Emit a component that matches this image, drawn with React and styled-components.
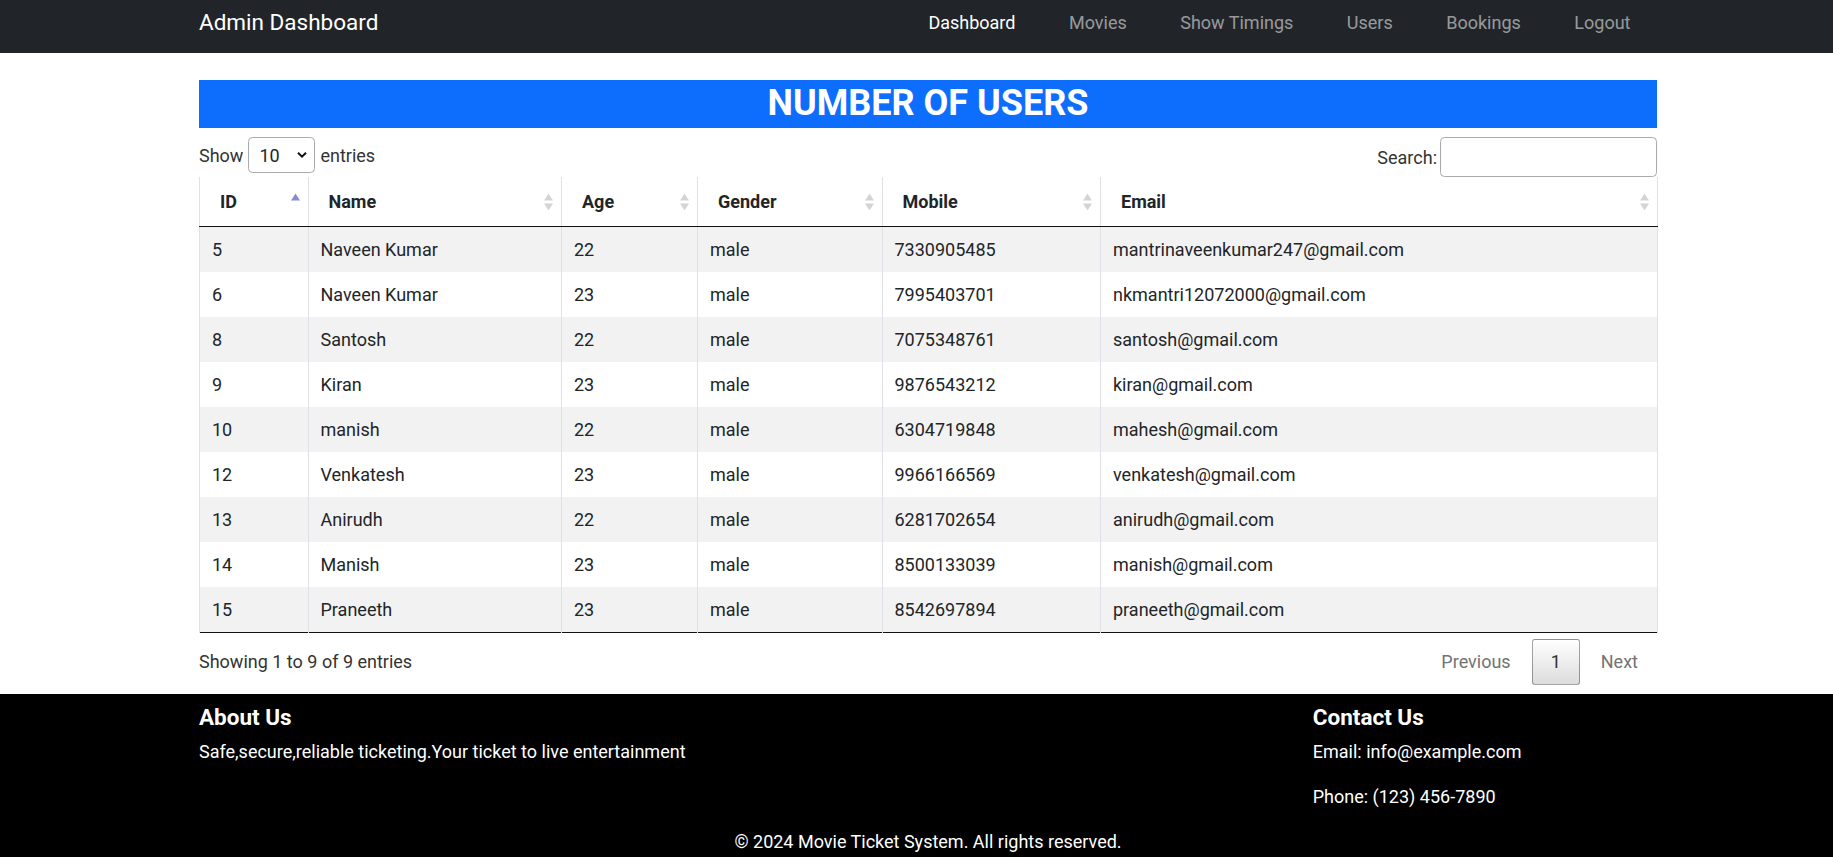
import React from 'react';
import styled, { createGlobalStyle } from 'styled-components';

const FONT = `Roboto, "Liberation Sans", Arial, sans-serif`;

const GlobalStyle = createGlobalStyle`
  html, body { margin: 0; padding: 0; }
  body {
    font-family: ${FONT};
    font-size: 18px;
    line-height: 1.5;
    color: #212529;
    background: #fff;
  }
  *, *::before, *::after { box-sizing: border-box; }
`;

const Container = styled.div`
  width: 1458px;
  margin-left: 199px;
`;

/* ---------- Navbar ---------- */
const Navbar = styled.nav`
  background: #212529;
  height: 53px;
`;

const NavInner = styled(Container)`
  display: flex;
  align-items: center;
  justify-content: space-between;
  height: 45px;
`;

const Brand = styled.a`
  color: #fff;
  font-size: 22.5px;
  line-height: 33.75px;
  text-decoration: none;
`;

const NavList = styled.ul`
  display: flex;
  list-style: none;
  margin: 0;
  padding: 0;
`;

const NavLink = styled.a`
  display: block;
  padding: 9px 26.5px 9px 27px;
  line-height: 27px;
  color: ${(p) => (p.$active ? '#fff' : 'rgba(255,255,255,0.55)')};
  text-decoration: none;
`;

/* ---------- Title + controls ---------- */
const Title = styled.h2`
  margin: 27px 0 0;
  height: 48px;
  line-height: 46px;
  background: #0d6efd;
  color: #fff;
  text-align: center;
  font-size: 36px;
  font-weight: 700;
`;

const Controls = styled.div`
  display: flex;
  justify-content: space-between;
  align-items: flex-start;
  margin-top: 9px;
  height: 40px;
  color: #333;
`;

const LengthLabel = styled.label`
  display: flex;
  align-items: center;
  gap: 5px;
  height: 36px;
`;

const SelectWrap = styled.span`
  position: relative;
  display: inline-block;
  width: 67px;
  height: 36px;
`;

const Select = styled.select`
  appearance: none;
  -webkit-appearance: none;
  width: 100%;
  height: 100%;
  border: 1px solid #aaa;
  border-radius: 4.5px;
  padding: 0 0 0 10px;
  background: #fff;
  color: #212529;
  font: inherit;
  font-size: 18px;
`;

const Chevron = styled.svg`
  position: absolute;
  right: 8px;
  top: 50%;
  transform: translateY(-50%);
  pointer-events: none;
`;

const SearchLabel = styled.label`
  display: flex;
  align-items: center;
  gap: 3px;
  height: 40px;
`;

const SearchInput = styled.input`
  width: 217px;
  height: 40px;
  border: 1px solid #aaa;
  border-radius: 4.5px;
  padding: 4px 8px;
  font: inherit;
  background: #fff;
`;

/* ---------- Table ---------- */
const Table = styled.table`
  width: 1458px;
  border-collapse: collapse;
  table-layout: fixed;
  border-bottom: 1px solid #111;
`;

const Th = styled.th`
  position: relative;
  padding: 11px 20px;
  line-height: 27px;
  text-align: left;
  font-weight: 700;
  color: #212529;
  border-left: 1px solid #dee2e6;
  border-right: 1px solid #dee2e6;
  border-bottom: 1px solid #111;
`;

const Row = styled.tr`
  background: ${(p) => (p.$striped ? '#f2f2f2' : '#fff')};
`;

const Td = styled.td`
  padding: 9px 12px;
  line-height: 27px;
  border-left: 1px solid #dee2e6;
  border-right: 1px solid #dee2e6;
  white-space: nowrap;
`;

const SortSvg = styled.svg`
  position: absolute;
  right: 8px;
  top: 50%;
  transform: translateY(-50%);
`;

function SortIcon({ active }) {
  return (
    <SortSvg width="9" height="17" viewBox="0 0 9 17">
      <polygon points="0,7 4.5,0 9,7" fill={active ? '#8989d8' : '#d4d4d4'} />
      {!active && <polygon points="0,10 4.5,17 9,10" fill="#d4d4d4" />}
    </SortSvg>
  );
}

/* ---------- Bottom bar ---------- */
const BottomBar = styled.div`
  display: flex;
  justify-content: space-between;
  align-items: flex-start;
  margin-bottom: 9px;
`;

const Info = styled.div`
  padding-top: 15px;
  line-height: 27px;
  color: #333;
`;

const Pagination = styled.div`
  display: flex;
  padding-top: 6px;
`;

const PageButton = styled.span`
  display: inline-block;
  margin-left: 2px;
  padding: 9px 18px;
  line-height: 26px;
  border-radius: 3px;
  border: 1px solid ${(p) => (p.$current ? 'rgba(0,0,0,0.35)' : 'transparent')};
  background: ${(p) =>
    p.$current ? 'linear-gradient(to bottom, #ffffff 0%, #dcdcdc 100%)' : 'transparent'};
  color: ${(p) => (p.$current ? '#333' : '#737373')};
`;

/* ---------- Footer ---------- */
const Footer = styled.footer`
  background: #000;
  color: #fff;
  padding: 10px 0 9px;
`;

const FooterGrid = styled(Container)`
  display: grid;
  grid-template-columns: 1086.75px 344.25px;
  column-gap: 27px;
`;

const FooterTitle = styled.h5`
  margin: 0 0 7px;
  font-size: 22.5px;
  line-height: 27px;
  font-weight: 700;
`;

const FooterText = styled.p`
  margin: 0 0 18px;
  line-height: 27px;
`;

const Copyright = styled.p`
  width: 1458px;
  margin: 0 0 0 199px;
  text-align: center;
  line-height: 27px;
`;

const columns = [
  { label: 'ID', width: 108.5, active: true },
  { label: 'Name', width: 253.5 },
  { label: 'Age', width: 136 },
  { label: 'Gender', width: 184.5 },
  { label: 'Mobile', width: 218.5 },
  { label: 'Email', width: 557 },
];

const users = [
  ['5', 'Naveen Kumar', '22', 'male', '7330905485', 'mantrinaveenkumar247@gmail.com'],
  ['6', 'Naveen Kumar', '23', 'male', '7995403701', 'nkmantri12072000@gmail.com'],
  ['8', 'Santosh', '22', 'male', '7075348761', 'santosh@gmail.com'],
  ['9', 'Kiran', '23', 'male', '9876543212', 'kiran@gmail.com'],
  ['10', 'manish', '22', 'male', '6304719848', 'mahesh@gmail.com'],
  ['12', 'Venkatesh', '23', 'male', '9966166569', 'venkatesh@gmail.com'],
  ['13', 'Anirudh', '22', 'male', '6281702654', 'anirudh@gmail.com'],
  ['14', 'Manish', '23', 'male', '8500133039', 'manish@gmail.com'],
  ['15', 'Praneeth', '23', 'male', '8542697894', 'praneeth@gmail.com'],
];

const navItems = ['Dashboard', 'Movies', 'Show Timings', 'Users', 'Bookings', 'Logout'];

export default function App() {
  return (
    <>
      <GlobalStyle />
      <Navbar>
        <NavInner>
          <Brand href="#">Admin Dashboard</Brand>
          <NavList>
            {navItems.map((n, i) => (
              <li key={n}>
                <NavLink href="#" $active={i === 0}>
                  {n}
                </NavLink>
              </li>
            ))}
          </NavList>
        </NavInner>
      </Navbar>

      <Container as="main">
        <Title>NUMBER OF USERS</Title>
        <Controls>
          <LengthLabel>
            Show
            <SelectWrap>
              <Select defaultValue="10">
                <option value="10">10</option>
                <option value="25">25</option>
                <option value="50">50</option>
                <option value="100">100</option>
              </Select>
              <Chevron width="10" height="7" viewBox="0 0 10 7">
                <path d="M1 1.2 L5 5.2 L9 1.2" fill="none" stroke="#111" strokeWidth="2" />
              </Chevron>
            </SelectWrap>
            entries
          </LengthLabel>
          <SearchLabel>
            Search:
            <SearchInput type="search" />
          </SearchLabel>
        </Controls>

        <Table>
          <colgroup>
            {columns.map((c) => (
              <col key={c.label} style={{ width: c.width }} />
            ))}
          </colgroup>
          <thead>
            <tr>
              {columns.map((c) => (
                <Th key={c.label}>
                  {c.label}
                  <SortIcon active={c.active} />
                </Th>
              ))}
            </tr>
          </thead>
          <tbody>
            {users.map((u, i) => (
              <Row key={u[0]} $striped={i % 2 === 0}>
                {u.map((v, j) => (
                  <Td key={j}>{v}</Td>
                ))}
              </Row>
            ))}
          </tbody>
        </Table>

        <BottomBar>
          <Info>Showing 1 to 9 of 9 entries</Info>
          <Pagination>
            <PageButton>Previous</PageButton>
            <PageButton $current>1</PageButton>
            <PageButton>Next</PageButton>
          </Pagination>
        </BottomBar>
      </Container>

      <Footer>
        <FooterGrid>
          <div>
            <FooterTitle>About Us</FooterTitle>
            <FooterText>Safe,secure,reliable ticketing.Your ticket to live entertainment</FooterText>
          </div>
          <div>
            <FooterTitle>Contact Us</FooterTitle>
            <FooterText>Email: info@example.com</FooterText>
            <FooterText>Phone: (123) 456-7890</FooterText>
          </div>
        </FooterGrid>
        <Copyright>© 2024 Movie Ticket System. All rights reserved.</Copyright>
      </Footer>
    </>
  );
}
